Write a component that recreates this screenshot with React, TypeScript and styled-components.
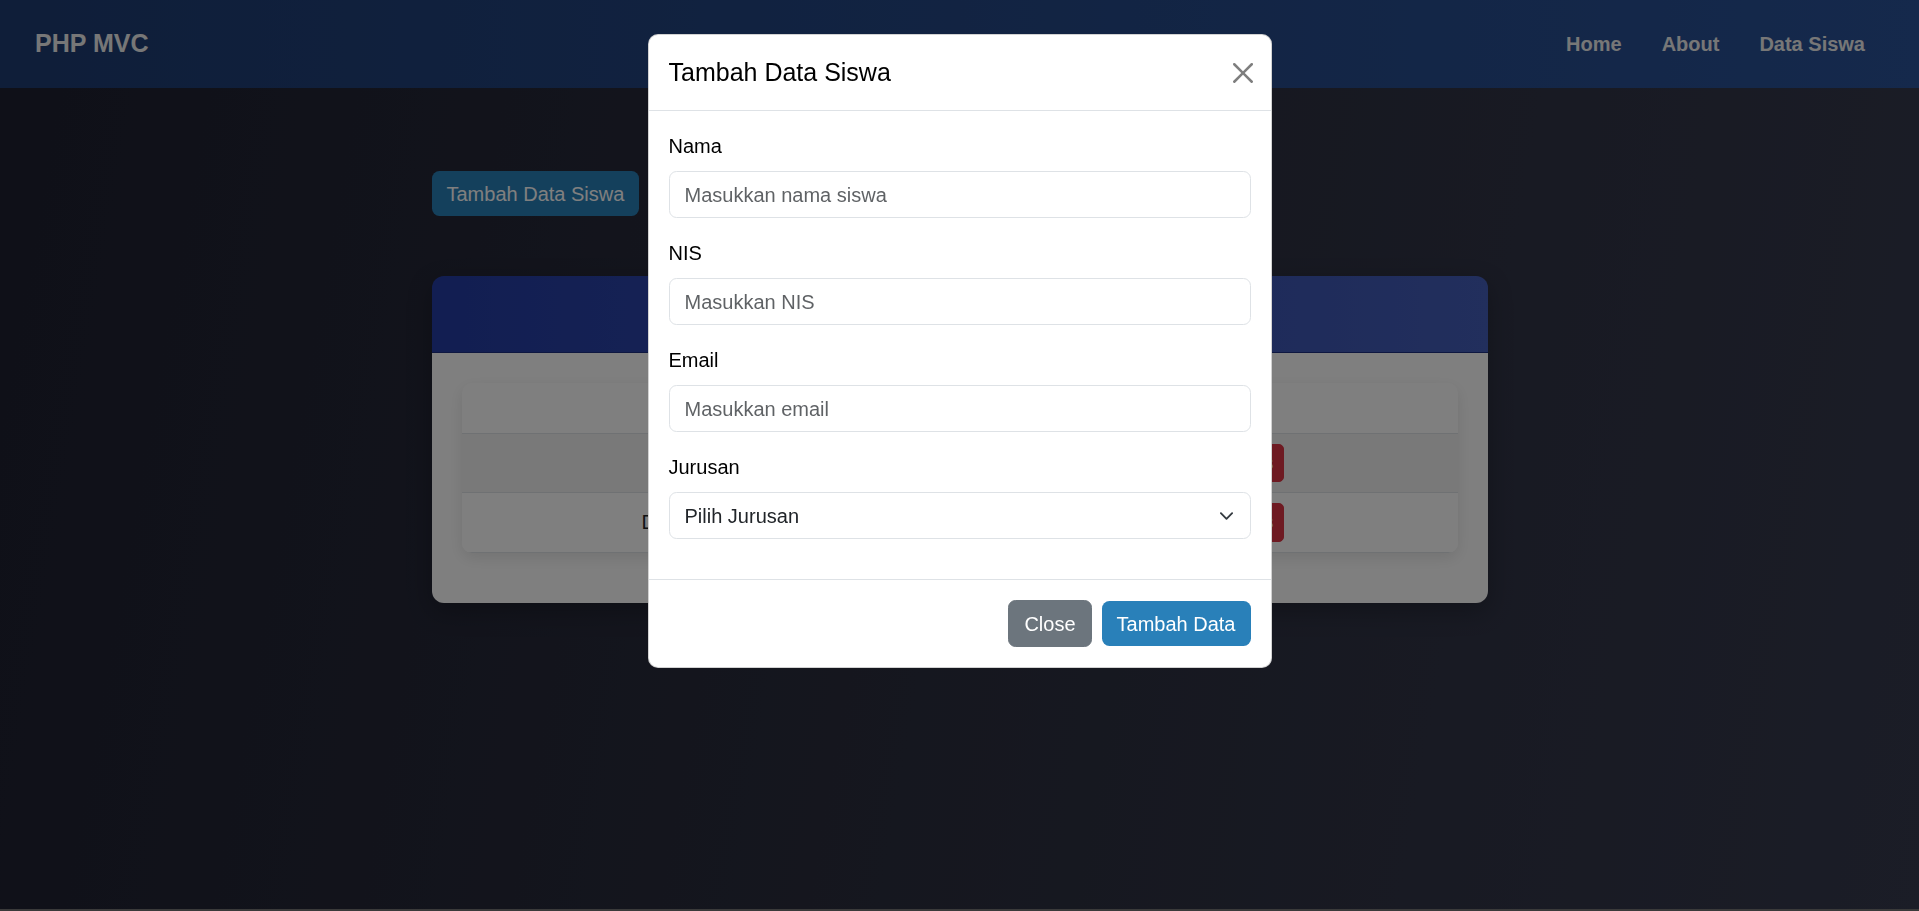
import * as React from 'react';
import styled, { createGlobalStyle, css } from 'styled-components';

const students = [
  { id: 1, nama: 'Andi Wijaya' },
  { id: 2, nama: 'Dimas Pratama' },
];

const fields = [
  { id: 'nama', label: 'Nama', placeholder: 'Masukkan nama siswa' },
  { id: 'nis', label: 'NIS', placeholder: 'Masukkan NIS' },
  { id: 'email', label: 'Email', placeholder: 'Masukkan email' },
];

const jurusan = ['Teknik Informatika', 'Sistem Informasi', 'Teknik Elektro'];

export default function App() {
  return (
    <>
      <GlobalStyle />
      <Page>
        <Navbar>
          <Brand>PHP MVC</Brand>
          <NavList>
            <NavLink>Home</NavLink>
            <NavLink>About</NavLink>
            <NavLink>Data Siswa</NavLink>
          </NavList>
        </Navbar>

        <Main>
          <Button $variant="primary">Tambah Data Siswa</Button>
          <Card>
            <CardHeader>Daftar Siswa</CardHeader>
            <CardBody>
              <TableWrap>
                <Table>
                  <thead>
                    <tr>
                      <Th>Nama</Th>
                      <Th>Aksi</Th>
                    </tr>
                  </thead>
                  <tbody>
                    {students.map((s, i) => (
                      <Row key={s.id} $striped={i % 2 === 0}>
                        <Td>{s.nama}</Td>
                        <Td>
                          <Actions>
                            <Button $variant="primary" $small>Detail</Button>
                            <Button $variant="danger" $small>Hapus</Button>
                          </Actions>
                        </Td>
                      </Row>
                    ))}
                  </tbody>
                </Table>
              </TableWrap>
            </CardBody>
          </Card>
        </Main>
      </Page>

      <ModalLayer>
        <Dialog>
          <ModalHeader>
            <ModalTitle>Tambah Data Siswa</ModalTitle>
            <CloseX aria-label="Close">
              <svg width="20" height="20" viewBox="0 0 16 16" fill="#000">
                <path d="M.293.293a1 1 0 0 1 1.414 0L8 6.586 14.293.293a1 1 0 1 1 1.414 1.414L9.414 8l6.293 6.293a1 1 0 0 1-1.414 1.414L8 9.414l-6.293 6.293a1 1 0 0 1-1.414-1.414L6.586 8 .293 1.707a1 1 0 0 1 0-1.414" />
              </svg>
            </CloseX>
          </ModalHeader>

          <ModalBody>
            {fields.map(f => (
              <Field key={f.id}>
                <Label htmlFor={f.id}>{f.label}</Label>
                <Input id={f.id} placeholder={f.placeholder} />
              </Field>
            ))}
            <Field>
              <Label htmlFor="jurusan">Jurusan</Label>
              <SelectWrap>
                <Select id="jurusan" defaultValue="">
                  <option value="">Pilih Jurusan</option>
                  {jurusan.map(j => (
                    <option key={j} value={j}>{j}</option>
                  ))}
                </Select>
                <Chevron width="15" height="15" viewBox="0 0 16 16" fill="none">
                  <path d="m2 5 6 6 6-6" stroke="#343a40" strokeWidth="2" strokeLinecap="round" strokeLinejoin="round" />
                </Chevron>
              </SelectWrap>
            </Field>
          </ModalBody>

          <ModalFooter>
            <Button $variant="secondary">Close</Button>
            <Button $variant="primary">Tambah Data</Button>
          </ModalFooter>
        </Dialog>
      </ModalLayer>
    </>
  );
}

const GlobalStyle = createGlobalStyle`
  * { box-sizing: border-box; }
  html { background: #747474; }
  body {
    margin: 0;
    font-family: "Liberation Sans", Arial, sans-serif;
    font-size: 20px;
    line-height: 1.5;
    color: #212529;
  }
`;

const Page = styled.div`
  min-height: 909px;
  background: linear-gradient(100deg, #1e2030 0%, #2b2e3e 50%, #363a4e 100%);
`;

const Navbar = styled.nav`
  height: 88px;
  display: flex;
  align-items: center;
  justify-content: space-between;
  padding: 0 54px 0 35px;
  background: linear-gradient(90deg, #1e3c72, #2a5298);
`;

const Brand = styled.div`
  font-size: 25px;
  font-weight: 700;
  color: #eee;
`;

const NavList = styled.div`
  display: flex;
  gap: 40px;
`;

const NavLink = styled.a`
  font-size: 20px;
  font-weight: 700;
  color: #eee;
`;

const Main = styled.main`
  width: 1056px;
  margin: 83px auto 0;
  display: flex;
  flex-direction: column;
  align-items: flex-start;
  gap: 60px;
`;

const variants = {
  primary: css`
    background: #2980b9;
    border: none;
  `,
  secondary: css`
    background: #6c757d;
    border: 1.25px solid #6c757d;
  `,
  danger: css`
    background: #dc3545;
    border: 1.25px solid #dc3545;
  `,
};

const Button = styled.button<{ $variant: keyof typeof variants; $small?: boolean }>`
  ${p => variants[p.$variant]}
  color: #fff;
  font-family: inherit;
  cursor: pointer;
  ${p => p.$small ? css`
    font-size: 17.5px;
    line-height: 26.25px;
    padding: 5px 10px;
    border-radius: 5px;
  ` : css`
    font-size: 20px;
    line-height: 30px;
    padding: 7.5px 15px;
    border-radius: 7.5px;
  `}
`;

const Card = styled.section`
  align-self: stretch;
  border-radius: 12px;
  overflow: hidden;
  box-shadow: 0 8px 24px rgba(0, 0, 0, 0.25);
`;

const CardHeader = styled.div`
  height: 77px;
  display: flex;
  align-items: center;
  justify-content: center;
  color: #fff;
  font-size: 25px;
  font-weight: 700;
  background: linear-gradient(90deg, #243ca4, #445eba);
  border-bottom: 1px solid #1c2f80;
`;

const CardBody = styled.div`
  background: #fff;
  padding: 30px;
`;

const TableWrap = styled.div`
  border-radius: 10px;
  overflow: hidden;
  box-shadow: 0 5px 15px rgba(0, 0, 0, 0.1);
  margin-bottom: 20px;
`;

const Table = styled.table`
  width: 100%;
  border-collapse: collapse;
  table-layout: fixed;
  text-align: center;
`;

const Th = styled.th`
  width: 50%;
  padding: 10px;
  font-weight: 700;
  border-bottom: 1.25px solid #dee2e6;
`;

const Row = styled.tr<{ $striped: boolean }>`
  background: ${p => (p.$striped ? '#f2f2f2' : '#fff')};
  border-bottom: 1.25px solid #dee2e6;
`;

const Td = styled.td`
  padding: 10px;
  vertical-align: middle;
`;

const Actions = styled.div`
  display: flex;
  justify-content: center;
  gap: 14px;
`;

const ModalLayer = styled.div`
  position: fixed;
  inset: 0;
  z-index: 10;
  display: flex;
  justify-content: center;
  align-items: flex-start;
  padding-top: 34px;
  background: rgba(0, 0, 0, 0.5);
`;

const Dialog = styled.div`
  width: 624px;
  background: #fff;
  border: 1.25px solid rgba(0, 0, 0, 0.175);
  border-radius: 10px;
`;

const ModalHeader = styled.div`
  display: flex;
  align-items: center;
  justify-content: space-between;
  padding: 20px;
  border-bottom: 1.25px solid #dee2e6;
`;

const ModalTitle = styled.h5`
  margin: 0;
  font-size: 25px;
  font-weight: 400;
  line-height: 35px;
  color: #000;
`;

const CloseX = styled.button`
  display: flex;
  padding: 5px;
  margin-right: -7px;
  border: 0;
  background: transparent;
  opacity: 0.5;
  cursor: pointer;
`;

const ModalBody = styled.div`
  padding: 20px;
  display: flex;
  flex-direction: column;
  gap: 20px;
`;

const Field = styled.div`
  display: flex;
  flex-direction: column;
  &:last-child { margin-bottom: 20px; }
`;

const Label = styled.label`
  margin-bottom: 10px;
  font-size: 20px;
  color: #000;
`;

const controlStyles = css`
  width: 100%;
  padding: 7.5px 15px;
  font-family: inherit;
  font-size: 20px;
  line-height: 30px;
  color: #212529;
  background: #fff;
  border: 1.25px solid #dee2e6;
  border-radius: 7.5px;
  outline: none;
`;

const Input = styled.input`
  ${controlStyles}
  &::placeholder { color: rgba(33, 37, 41, 0.72); }
`;

const SelectWrap = styled.div`
  position: relative;
`;

const Select = styled.select`
  ${controlStyles}
  appearance: none;
  padding-right: 56px;
`;

const Chevron = styled.svg`
  position: absolute;
  right: 17px;
  top: 50%;
  transform: translateY(-50%);
  pointer-events: none;
`;

const ModalFooter = styled.div`
  display: flex;
  justify-content: flex-end;
  align-items: center;
  gap: 10px;
  padding: 20px;
  border-top: 1.25px solid #dee2e6;
`;
